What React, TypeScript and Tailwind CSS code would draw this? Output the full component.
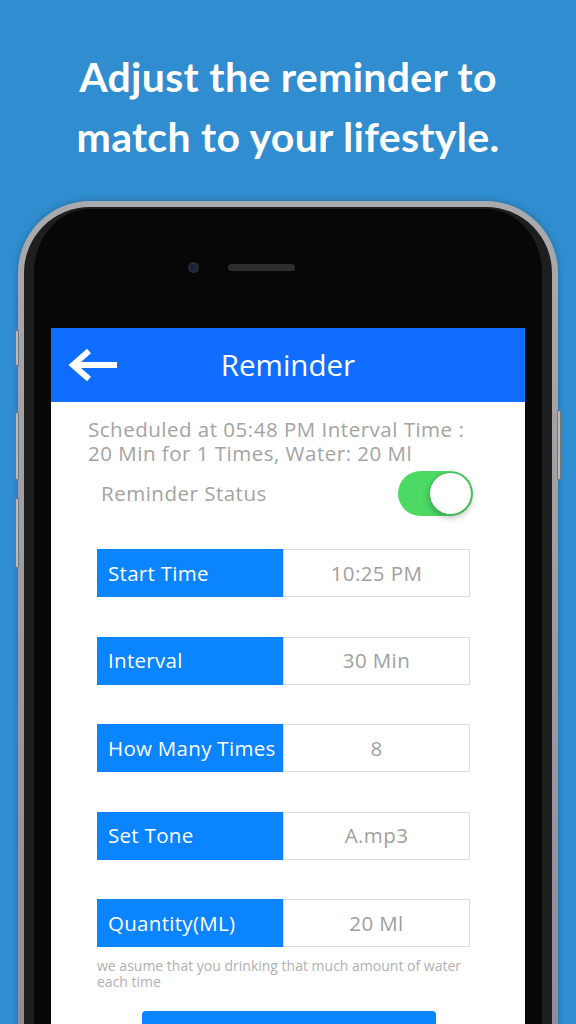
import { useState } from 'react'

interface SettingRow {
  label: string
  value: string
}

const rows: SettingRow[] = [
  { label: 'Start Time', value: '10:25 PM' },
  { label: 'Interval', value: '30 Min' },
  { label: 'How Many Times', value: '8' },
  { label: 'Set Tone', value: 'A.mp3' },
  { label: 'Quantity(ML)', value: '20 Ml' },
]

const screenFont = { fontFamily: '"Open Sans", "Noto Sans", sans-serif' }

export default function App() {
  const [enabled, setEnabled] = useState(true)

  return (
    <div className="w-[576px] h-[1024px] overflow-hidden bg-[#308dcf] flex flex-col items-center">
      <h1
        className="pt-[47px] text-center text-white font-bold text-[41px] leading-[60px] tracking-[0.3px]"
        style={{ fontFamily: 'Lato, "Open Sans", sans-serif' }}
      >
        Adjust the reminder to
        <br />
        match to your lifestyle.
      </h1>

      {/* phone body */}
      <div className="relative mt-[34px] w-[540px] flex-1 flex flex-col rounded-t-[72px] bg-gradient-to-b from-[#a9a9ae] to-[#8d8d93] px-[6px] pt-[6px] shadow-[0_0_6px_rgba(0,0,0,0.25)]">
        <div className="absolute left-[-3px] top-[129px] w-[4px] h-[36px] rounded-l-[2px] bg-[#b9b9be] border border-[#77777c]" />
        <div className="absolute left-[-3px] top-[211px] w-[4px] h-[68px] rounded-l-[2px] bg-[#b9b9be] border border-[#77777c]" />
        <div className="absolute left-[-3px] top-[297px] w-[4px] h-[70px] rounded-l-[2px] bg-[#b9b9be] border border-[#77777c]" />
        <div className="absolute right-[-3px] top-[209px] w-[4px] h-[70px] rounded-r-[2px] bg-[#b9b9be] border border-[#77777c]" />

        <div className="relative flex-1 flex flex-col rounded-t-[66px] bg-[#070707] border-x-[10px] border-t-[2px] border-[#1e1e1e] px-[17px] pt-[119px]">
          {/* camera + earpiece */}
          <div className="absolute left-[154px] top-[53px] w-[11px] h-[11px] rounded-full bg-[#1c2140] border-[2px] border-[#2b2b30]" />
          <div className="absolute left-[194px] top-[55px] w-[67px] h-[7px] rounded-full bg-[#2e2e31]" />

          {/* screen */}
          <div className="flex-1 bg-white" style={screenFont}>
            <div className="relative h-[74px] bg-[#0f6dff] flex items-center justify-center">
              <svg className="absolute left-[17px] top-[20px]" width="50" height="34" viewBox="0 0 50 34" fill="none">
                <path d="M7 17 H49" stroke="white" strokeWidth="6" />
                <path d="M21 3 L5 17 L21 31" stroke="white" strokeWidth="6" strokeLinejoin="miter" />
              </svg>
              <span className="text-white text-[29.5px] leading-none">Reminder</span>
            </div>

            <div className="pl-[37px] pr-[20px] pt-[15px] text-[#a3a3a3] text-[20.5px] leading-[24px] tracking-[0.5px] whitespace-nowrap">
              Scheduled at 05:48 PM Interval Time :
              <br />
              20 Min for 1 Times, Water: 20 Ml
            </div>

            <div className="flex items-center justify-between pl-[50px] pr-[52px] mt-[6px] h-[45px]">
              <span className="text-[#a3a3a3] text-[20.5px] tracking-[0.5px]">Reminder Status</span>
              <button
                onClick={() => setEnabled(!enabled)}
                className={
                  enabled
                    ? 'relative w-[75px] h-[45px] rounded-full bg-[#4cd964]'
                    : 'relative w-[75px] h-[45px] rounded-full bg-[#e5e5ea]'
                }
              >
                <span
                  className={
                    enabled
                      ? 'absolute top-[1px] right-[1px] w-[43px] h-[43px] rounded-full bg-white border border-[#3fb653] shadow-[0_3px_6px_rgba(0,0,0,0.25)]'
                      : 'absolute top-[1px] left-[1px] w-[43px] h-[43px] rounded-full bg-white shadow-[0_3px_6px_rgba(0,0,0,0.25)]'
                  }
                />
              </button>
            </div>

            <div className="mt-[33px] ml-[46px] w-[373px] flex flex-col gap-[39.5px]">
              {rows.map((row) => (
                <div key={row.label} className="flex h-[48px]">
                  <div className="w-[186px] bg-[#0a84ff] flex items-center pl-[11px] text-white text-[20.5px] whitespace-nowrap tracking-[0.3px]">
                    {row.label}
                  </div>
                  <div className="flex-1 border border-[#dcdcdc] flex items-center justify-center text-[#a0a0a0] text-[20.5px] tracking-[0.4px]">
                    {row.value}
                  </div>
                </div>
              ))}
            </div>

            <p className="ml-[46px] w-[373px] mt-[11px] text-[#b0b0b0] text-[14px] leading-[16px]">
              we asume that you drinking that much amount of water each time
            </p>

            <div className="mt-[21px] ml-[91px] w-[294px] h-[48px] rounded-[4px] bg-[#0a84ff]" />
          </div>
        </div>
      </div>
    </div>
  )
}
